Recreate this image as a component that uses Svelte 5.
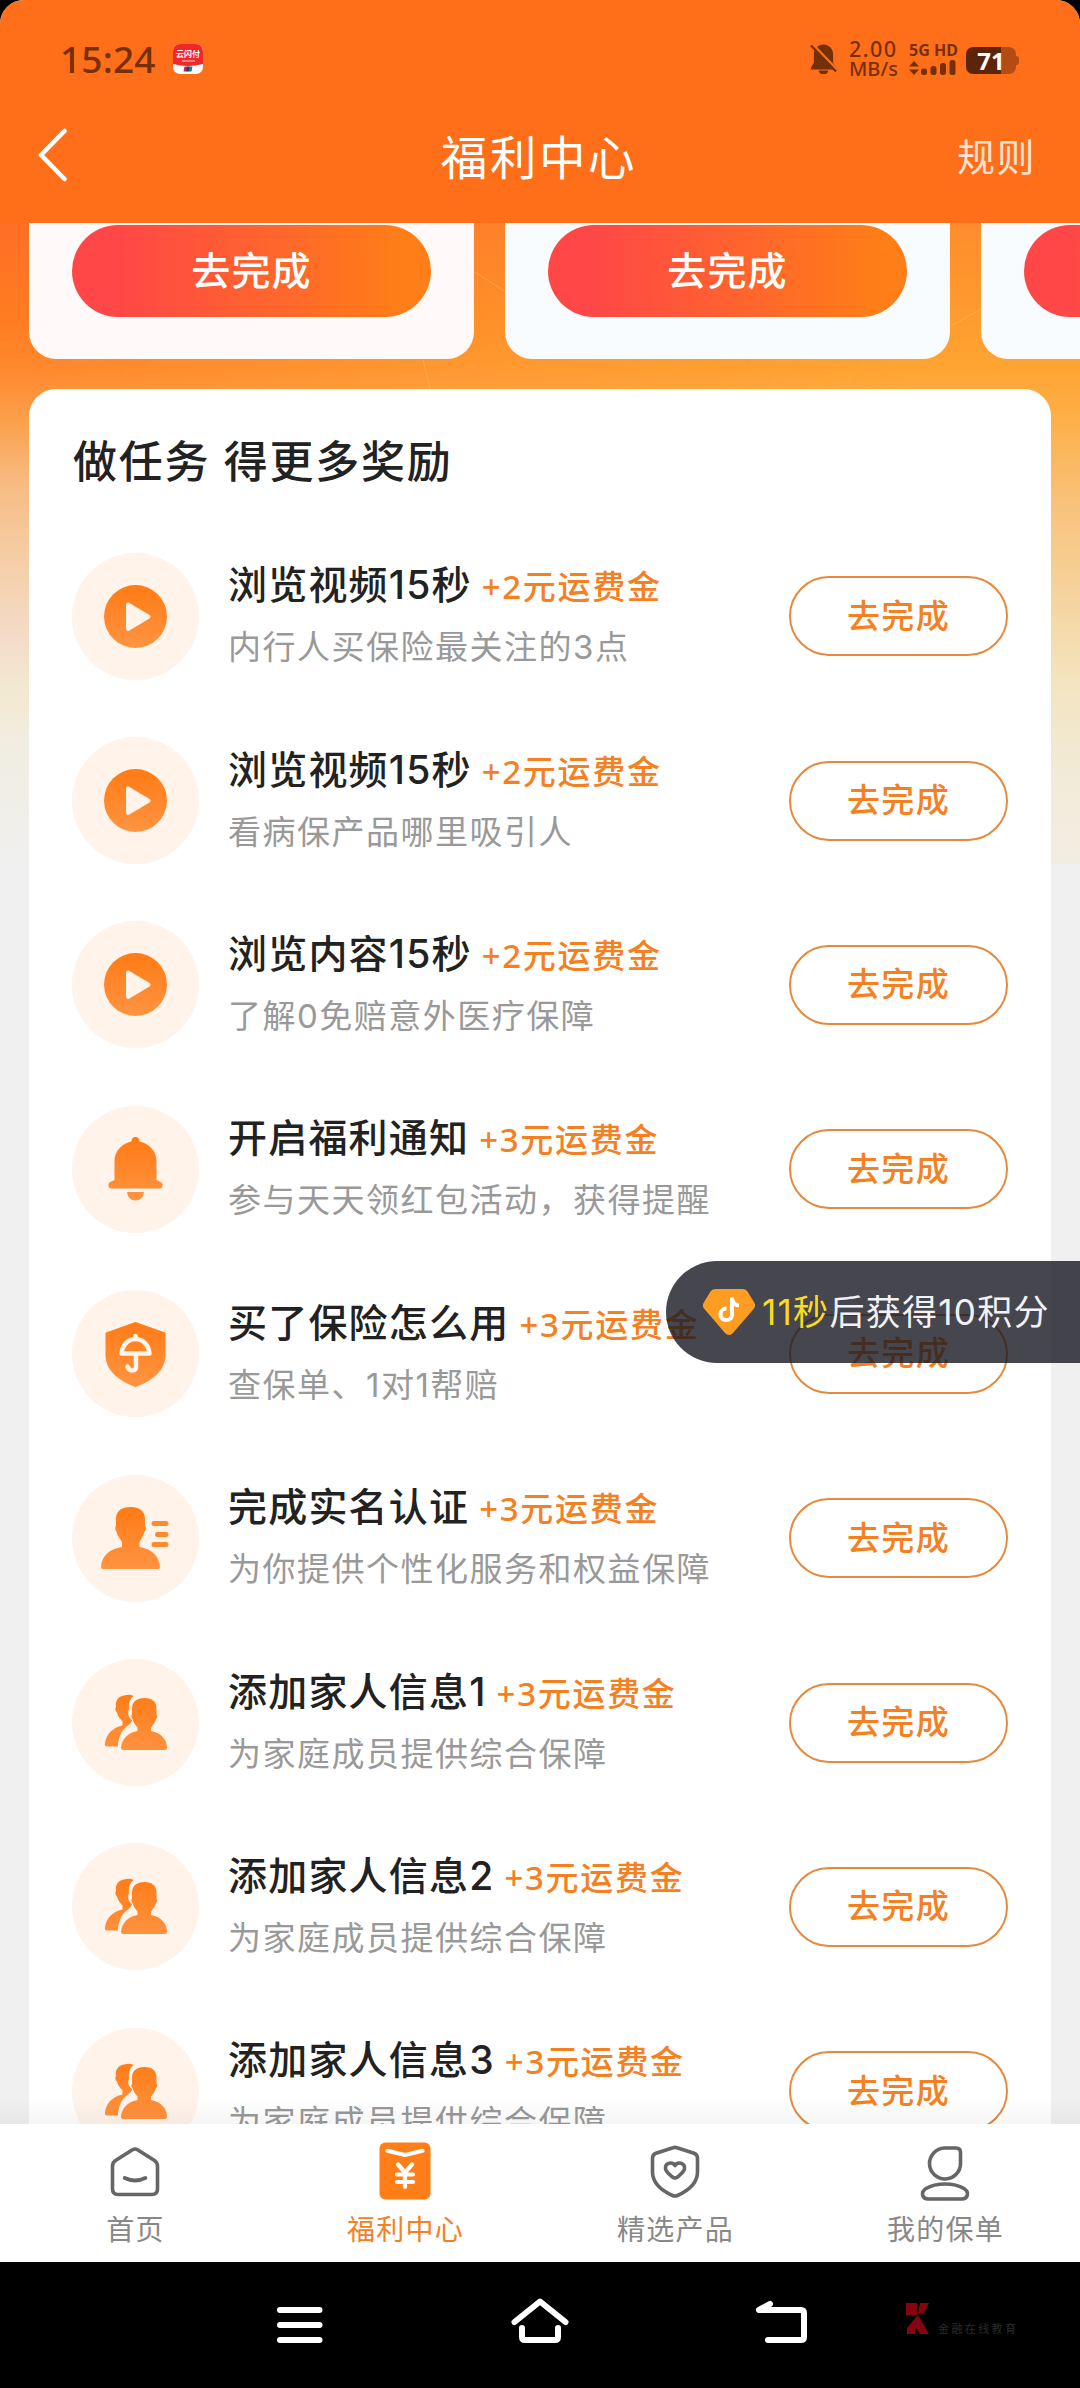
<script>
	let seconds = 11;

	const offers = [
		{ tone: 'pink', label: '去完成' },
		{ tone: 'blue', label: '去完成' },
		{ tone: 'blue', label: '去完成' }
	];

	const tasks = [
		{ icon: 'play', title: '浏览视频15秒', reward: '+2元运费金', desc: '内行人买保险最关注的3点' },
		{ icon: 'play', title: '浏览视频15秒', reward: '+2元运费金', desc: '看病保产品哪里吸引人' },
		{ icon: 'play', title: '浏览内容15秒', reward: '+2元运费金', desc: '了解0免赔意外医疗保障' },
		{ icon: 'bell', title: '开启福利通知', reward: '+3元运费金', desc: '参与天天领红包活动，获得提醒' },
		{ icon: 'shield', title: '买了保险怎么用', reward: '+3元运费金', desc: '查保单、1对1帮赔' },
		{ icon: 'person', title: '完成实名认证', reward: '+3元运费金', desc: '为你提供个性化服务和权益保障' },
		{ icon: 'family', title: '添加家人信息1', reward: '+3元运费金', desc: '为家庭成员提供综合保障' },
		{ icon: 'family', title: '添加家人信息2', reward: '+3元运费金', desc: '为家庭成员提供综合保障' },
		{ icon: 'family', title: '添加家人信息3', reward: '+3元运费金', desc: '为家庭成员提供综合保障' }
	];

	const tabs = [
		{ id: 'home', label: '首页' },
		{ id: 'welfare', label: '福利中心' },
		{ id: 'products', label: '精选产品' },
		{ id: 'mine', label: '我的保单' }
	];

	let activeTab = 'welfare';
</script>

<div class="screen">
	<header class="header">
		<div class="status">
			<span class="clock">15:24</span>
			<svg class="app-icon" viewBox="0 0 30 30">
				<rect width="30" height="30" rx="7" fill="#fff" />
				<path d="M0 20V7a7 7 0 0 1 7-7h16a7 7 0 0 1 7 7v13q-15 4-30 0z" fill="#f0282c" />
				<text x="15" y="13" text-anchor="middle" font-size="8" font-weight="700" fill="#fff">云闪付</text>
				<path d="M9 17h13" stroke="#ff9a94" stroke-width="1.4" />
				<path d="M11.5 22.500h3l-1 5h-3z" fill="#d8232f" />
				<path d="M14 22.500h3l-1 5h-3z" fill="#1c3f6e" />
				<path d="M16.5 22.500h3l-1 5h-3z" fill="#12807f" />
			</svg>
			<div class="status-right">
				<svg class="muted" viewBox="0 0 28 30">
					<path d="M14 0C8.500 0 4 4.500 4 10v9l-3 5v2h26v-2l-3-5v-9C24 4.500 19.500 0 14 0zM9 27a5 4 0 0 0 10 0z" fill="#75300a" />
					<path d="M3 0l26 27" stroke="#ff6e18" stroke-width="2.600" />
					<path d="M1 1l26 27" stroke="#75300a" stroke-width="2.400" />
				</svg>
				<div class="speed"><span class="rate">2.00</span><span>MB/s</span></div>
				<div class="network">
					<span>5G HD</span>
					<svg viewBox="0 0 47 16" width="47" height="16" fill="#75300a">
						<path d="M0 6.500L5 1l5 5.500zM0 9.500L5 15l5-5.500z" />
						<rect x="12" y="8.500" width="6" height="6.500" rx="2.500" />
						<rect x="21.5" y="6" width="6" height="9" rx="2.500" />
						<rect x="31" y="3" width="6" height="12" rx="2.500" />
						<rect x="40.5" y="0" width="6" height="15" rx="2.500" />
					</svg>
				</div>
				<div class="battery"><span>71</span></div>
			</div>
		</div>
		<div class="nav">
			<button class="back" aria-label="返回">
				<svg viewBox="0 0 30 54" fill="none" stroke="#fff" stroke-width="4.600" stroke-linecap="round" stroke-linejoin="round">
					<path d="M26.5 3L3 27l23.500 24" />
				</svg>
			</button>
			<h1>福利中心</h1>
			<span class="rules">规则</span>
		</div>
	</header>

	<main class="content">
		<svg class="rays" viewBox="0 0 1080 200" fill="none" stroke="#ffc06a" stroke-opacity="0.5">
			<path d="M475 49l31 20M423 137l8 32M951 103l30-17" />
		</svg>

		<div class="offers">
			{#each offers as offer}
				<div class="offer offer-{offer.tone}">
					<button class="offer-btn">{offer.label}</button>
				</div>
			{/each}
		</div>

		<section class="panel">
			<h2>做任务 得更多奖励</h2>
			{#each tasks as task}
				<div class="task">
					<div class="task-icon">
						<svg viewBox="0 0 127 127">
							<defs>
								<linearGradient id="warm" gradientUnits="userSpaceOnUse" x1="0" y1="30" x2="0" y2="98">
									<stop offset="0" stop-color="#ff7a14" />
									<stop offset="1" stop-color="#ff9544" />
								</linearGradient>
							</defs>
							{#if task.icon === 'play'}
								<circle cx="63.5" cy="63.5" r="31.5" fill="url(#warm)" />
								<path d="M56 51.500v24.500L76.500 63.700z" fill="#fff3ea" stroke="#fff3ea" stroke-width="4" stroke-linejoin="round" />
							{:else if task.icon === 'bell'}
								<path d="M63.5 31a4 4 0 0 1 4 4.500C77 37.500 84.500 45 84.500 55v19q3 1 5 2.500a3.500 3.500 0 0 1-1.500 6H39a3.500 3.500 0 0 1-1.500-6q2-1.500 5-2.500V55c0-10 7.500-17.500 17-19.500a4 4 0 0 1 4-4.500z" fill="url(#warm)" />
								<path d="M55 86h17q-1 8.500-8.500 8.500T55 86z" fill="url(#warm)" />
							{:else if task.icon === 'shield'}
								<path d="M63.5 32.500L93 43v22c0 16-14 26-29.500 31.500C48 91 34 81 34 65V43z" fill="url(#warm)" stroke="url(#warm)" stroke-linejoin="round" />
								<g fill="none" stroke="#fff3ea" stroke-width="4.500" stroke-linecap="round" stroke-linejoin="round">
									<path d="M49.5 63.500c1-9 7-14.500 14-14.500s13 5.500 14 14.500zM63.5 46v2M64 64v13.500c0 4-7.500 4-8.500-1" />
								</g>
							{:else if task.icon === 'person'}
								<path d="M58.5 32c9 0 14.500 4 14.500 12v7c1.500 1 1 4.500-.5 5.500-1 5-4 8-5 11v4.500C79 74 87 80 88 92q0 2-2 2H31q-2 0-2-2c1-12 9-18 21-20v-4.500c-1-3-4.500-6-5.500-11-1.500-1-1.500-4.500-.5-5.500v-7c0-8 5.500-12 14.500-12z" fill="url(#warm)" />
								<path d="M82 48.500h12M85.5 59.500H94M82 69.500h12" stroke="#ff8a2e" stroke-width="5" stroke-linecap="round" />
							{:else}
								<path d="M52 36.500q5.500-1.500 9.500.5c-4 3-5 7.500-4.500 13.500-2 5 0 8 3 10.500 0 3-4 5-7 8-4 4-6.500 9.500-7 18.500H35q-2.500 0-2-3c1-9 7-15.500 17.500-18v-4c-2-2.500-5-5.500-5.500-9-2-1.500-2-4-1-5.500-1-6.500 2.500-10.500 8-11.500z" fill="url(#warm)" />
								<path d="M72.5 39c7.500 0 12 3.500 12 10.500v6c1 1.500 1 3.500-.5 4.500-1 4-3.500 6.500-5 8.500v3.500c10.500 2 16 9 16 16.500q0 2.500-2.500 2.500h-41q-2.500 0-2.500-2.500c1-8 6-14.500 16.500-16.500v-3.500c-1.500-2-4-4.500-5-8.500-1.500-1-1.500-3-.5-4.500v-6c0-7 5-10.500 12.500-10.500z" fill="url(#warm)" />
							{/if}
						</svg>
					</div>
					<div class="task-body">
						<div class="task-title">
							<span class="name">{task.title}</span>
							<span class="reward">{task.reward}</span>
						</div>
						<p>{task.desc}</p>
					</div>
					<button class="task-btn">去完成</button>
				</div>
			{/each}
		</section>
		<div class="fade"></div>
	</main>

	<div class="toast">
		<svg viewBox="0 0 52 46">
			<path d="M12 0h28q3 0 4.500 2.500l7 11.500q1.500 3-.5 5.500L30 44q-4 4-8 0L1 19.500q-2-2.500-.5-5.500l7-11.500Q9 0 12 0z" fill="#ff9d23" />
			<path d="M29 8.500v17.800a5.800 5.800 0 1 1-5.500-6.800M29 9.500q1 6.500 7 7" fill="none" stroke="#fff" stroke-width="4" />
		</svg>
		<span><b>{seconds}秒</b>后获得10积分</span>
	</div>

	<nav class="tabs">
		{#each tabs as tab}
			<button class="tab" class:active={activeTab === tab.id} on:click={() => (activeTab = tab.id)}>
				<svg viewBox="0 0 60 60" fill="none" stroke="#666" stroke-width="3.600" stroke-linecap="round" stroke-linejoin="round">
					{#if tab.id === 'home'}
						<path d="M27.5 8.700q2.500-1.500 5 0l17 10.800q3 2 3 5.500v23q0 5.500-5.500 5.500H13q-5.500 0-5.500-5.500V25q0-3.500 3-5.500z" />
						<path d="M19.8 37q10.200 5 20.500 0" stroke-width="4" />
					{:else if tab.id === 'welfare'}
						<rect x="4.5" y="1.5" width="51" height="57" rx="6" fill="#ff7e18" stroke="none" />
						<g stroke="#fff" stroke-width="4.200">
							<path d="M12.5 9.800L30 14l17.500-4.200" />
							<path d="M23 23.500l7 8 7-8M30 32v14M22 33.500h16M22 41h16" />
						</g>
					{:else if tab.id === 'products'}
						<path d="M28 6.700q2-.7 4 0l17 5.500q3.500 1.200 3.500 5V31c0 12-9 18.500-20 23.500q-2.500 1-5 0C16.500 49.500 7.500 43 7.500 31V17.200q0-3.800 3.500-5z" />
						<path d="M30 24.500c-2.500-4-10-3-9.500 3 0 3 4 6 7 8.500q2.500 2 5 0c3-2.500 7-5.500 7-8.500.5-6-7-7-9.500-3z" />
					{:else}
						<path d="M29.500 7H41q4.500 0 4.500 4.500V22a15.500 15.500 0 1 1-16-15z" />
						<path d="M30 43c8 0 14 1.500 19 4.500 6 4 3.500 10.500-2 10.500H13c-5.500 0-8-6.500-2-10.500C16 44.500 22 43 30 43z" />
					{/if}
				</svg>
				<span>{tab.label}</span>
			</button>
		{/each}
	</nav>

	<footer class="system">
		<svg class="sys-icons" viewBox="0 0 540 126" fill="none" stroke="#fff" stroke-width="6" stroke-linecap="round" stroke-linejoin="round">
			<path d="M10 48h39.500M10 63h39.500M10 78h39.500" />
			<path d="M244.5 60L270 39.500 295.500 60M252 66v9q0 3 3 3h30q3 0 3-3v-9" />
			<path d="M500 42l-11 6h42q3 0 3 3v24q0 3-3 3h-33" />
		</svg>
		<div class="watermark">
			<svg viewBox="0 0 30 34">
				<path d="M4 1h11v12H4zM18 1h9l-5 10h-6zM16 13l11 19h-9l-4-6-1 6H5v-6z" fill="#84040f" />
			</svg>
			<span>金融在线教育</span>
		</div>
	</footer>
</div>

<style>
	:global(body) {
		background: #000;
	}

	.screen {
		position: relative;
		display: flex;
		flex-direction: column;
		width: 1080px;
		height: 2388px;
		overflow: hidden;
		border-radius: 24px 24px 0 0;
		background: #f0f0f0;
		font-family: 'Noto Sans', 'Noto Sans CJK SC', sans-serif;
	}

	button {
		margin: 0;
		padding: 0;
		border: none;
		background: none;
		font-family: inherit;
	}

	h1,
	h2,
	p {
		margin: 0;
	}

	/* Header */
	.header {
		flex: none;
		height: 223px;
		background: #ff6e18;
	}

	.status {
		display: flex;
		align-items: center;
		height: 118px;
		padding: 0 64px 0 60px;
		color: #75300a;
	}

	.clock {
		width: 113px;
		padding-bottom: 2px;
		font-size: 37px;
		font-weight: 500;
		letter-spacing: 0.200px;
	}

	.app-icon {
		width: 30px;
		height: 30px;
	}

	.status-right {
		display: flex;
		align-items: center;
		margin-left: auto;
	}

	.muted {
		width: 27px;
		height: 30px;
		margin-right: 12px;
	}

	.speed {
		display: flex;
		flex-direction: column;
		width: 60px;
		padding-bottom: 1px;
		font-size: 20px;
		font-weight: 500;
		line-height: 20px;
	}

	.rate {
		font-size: 21.500px;
		letter-spacing: 1.400px;
	}

	.network {
		display: flex;
		flex-direction: column;
		width: 57px;
		font-size: 16px;
		font-weight: 700;
		line-height: 16px;
		white-space: nowrap;
	}

	.network svg {
		margin-top: 2px;
	}

	.battery {
		position: relative;
		width: 50px;
		height: 27px;
		margin-top: 3px;
		border-radius: 7px;
		background: linear-gradient(90deg, #5c2408 71%, #b34c12 71%);
		color: #fff;
		font-size: 24px;
		font-weight: 700;
		line-height: 27px;
		text-align: center;
	}

	.battery::after {
		content: '';
		position: absolute;
		top: 9px;
		right: -3px;
		width: 3px;
		height: 9px;
		border-radius: 0 3px 3px 0;
		background: #b34c12;
	}

	.nav {
		display: grid;
		grid-template-columns: 1fr auto 1fr;
		align-items: center;
		height: 73px;
		padding: 0 44px 0 38px;
	}

	.back {
		justify-self: start;
	}

	.back svg {
		display: block;
		width: 30px;
		height: 54px;
	}

	h1 {
		padding-left: 4px;
		color: #fff;
		font-size: 46.500px;
		font-weight: 400;
		letter-spacing: 2.600px;
	}

	.rules {
		justify-self: end;
		color: #ffe2d0;
		font-size: 38px;
		letter-spacing: 1.500px;
	}

	/* Scrolling area */
	.content {
		position: relative;
		flex: none;
		height: 1901px;
		overflow: hidden;
		background: linear-gradient(180deg, #ff6e26 0, #ff7c20 95px, #ff8a30 150px, #fba14c 200px, #f7bb82 260px, #f5cfa8 340px, #f3dcc8 415px, #f3e8cf 460px, #f1ede0 520px, #f0f0f0 640px);
	}

	/* The glow is warmer and yellower towards the right */
	.content::before {
		content: '';
		position: absolute;
		top: 0;
		left: 0;
		width: 1080px;
		height: 641px;
		background: linear-gradient(180deg, #ff8c2c 0, #ffa331 140px, #feae44 190px, #f8c27a 280px, #f5d5a0 380px, #f4e4c0 460px, #f2ebda 560px, #f1ede1 641px);
		mask-image: linear-gradient(90deg, transparent 3%, rgba(0, 0, 0, 0.6) 45%, #000 85%);
	}

	.rays {
		position: absolute;
		top: 0;
		left: 0;
		width: 1080px;
		height: 200px;
	}

	.offers {
		position: relative;
		display: flex;
		gap: 31px;
		padding-left: 29px;
	}

	.offer {
		flex: none;
		box-sizing: border-box;
		width: 445px;
		height: 136px;
		padding: 2px 43px 0;
		border-radius: 0 0 27px 27px;
	}

	.offer-pink {
		background: #fff9fa;
	}

	.offer-blue {
		background: #f8fcff;
	}

	.offer-btn {
		width: 100%;
		height: 92px;
		padding-bottom: 6px;
		border-radius: 46px;
		background: linear-gradient(90deg, #ff4747 12%, #ff7e17 92%);
		color: #fff;
		font-size: 39px;
		font-weight: 500;
		letter-spacing: 1.200px;
	}

	.panel {
		position: relative;
		height: 1800px;
		margin: 30px 29px 0;
		padding: 0 43px;
		border-radius: 27px;
		background: #fff;
	}

	h2 {
		height: 135px;
		padding-left: 1px;
		color: #222;
		font-size: 44px;
		font-weight: 500;
		line-height: 145px;
		letter-spacing: 1.800px;
	}

	.task {
		display: flex;
		align-items: center;
		height: 184.400px;
	}

	.task-icon {
		width: 127px;
		height: 127px;
		margin-right: 29px;
		border-radius: 50%;
		background: #fff3ea;
	}

	.task-icon svg {
		display: block;
	}

	.task-body {
		flex: 1;
		font-family: Inter, 'Noto Sans CJK SC', sans-serif;
		white-space: nowrap;
	}

	.task-title {
		display: flex;
		align-items: baseline;
		gap: 10px;
		height: 62px;
		line-height: 62px;
	}

	.name {
		color: #222;
		font-size: 39px;
		font-weight: 500;
		letter-spacing: 1.200px;
	}

	.reward {
		color: #f5801f;
		font-family: 'Noto Sans', 'Noto Sans CJK SC', sans-serif;
		font-size: 33px;
		font-weight: 500;
		letter-spacing: 1.700px;
	}

	.task-body p {
		height: 62px;
		color: #999;
		font-size: 33px;
		line-height: 62px;
		letter-spacing: 1.500px;
	}

	.task-btn {
		flex: none;
		width: 219px;
		height: 80px;
		padding-bottom: 5px;
		border: 2px solid #e58a3c;
		border-radius: 40px;
		color: #f5801f;
		font-size: 33px;
		font-weight: 500;
		letter-spacing: 1.400px;
	}

	.fade {
		position: absolute;
		right: 0;
		bottom: 0;
		left: 0;
		height: 26px;
		background: linear-gradient(180deg, rgba(0, 0, 0, 0), rgba(0, 0, 0, 0.04));
	}

	/* Countdown pill over the list */
	.toast {
		position: absolute;
		top: 1261px;
		right: 0;
		display: flex;
		align-items: center;
		box-sizing: border-box;
		width: 414px;
		height: 102px;
		padding-left: 37px;
		border-radius: 51px 0 0 51px;
		background: rgba(24, 24, 34, 0.8);
		color: #f2f2f6;
		font-family: Inter, 'Noto Sans CJK SC', sans-serif;
		font-size: 35px;
		letter-spacing: 1.300px;
		white-space: nowrap;
	}

	.toast svg {
		flex: none;
		width: 52px;
		height: 46px;
		margin-right: 7px;
	}

	.toast span {
		padding-bottom: 5px;
	}

	.toast b {
		color: #fbdc1c;
		font-weight: 400;
	}

	/* Bottom tabs */
	.tabs {
		display: flex;
		flex: none;
		height: 138px;
		background: #fff;
	}

	.tab {
		display: flex;
		flex: 1;
		flex-direction: column;
		align-items: center;
		padding-top: 17px;
		color: #888;
		font-size: 28px;
		line-height: 40px;
		letter-spacing: 1.200px;
	}

	.tab svg {
		width: 60px;
		height: 60px;
		margin-bottom: 8px;
	}

	.tab span {
		padding-left: 1px;
	}

	.tab.active {
		color: #f5801f;
	}

	/* System navigation */
	.system {
		display: flex;
		flex: none;
		height: 126px;
		padding-left: 270px;
		background: #000;
	}

	.sys-icons {
		flex: none;
		width: 540px;
		height: 126px;
	}

	.watermark {
		display: flex;
		align-items: flex-end;
		height: 74px;
		padding-left: 92px;
		color: #2c2c2c;
		font-size: 11px;
		line-height: 15px;
		letter-spacing: 2.400px;
	}

	.watermark svg {
		width: 30px;
		height: 34px;
		margin-right: 6px;
	}
</style>
